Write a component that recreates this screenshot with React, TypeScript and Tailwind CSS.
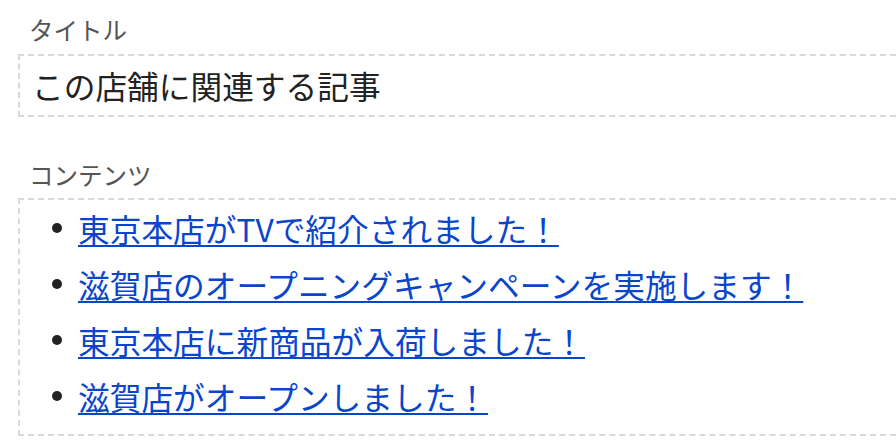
import React from "react";

const items = [
  "東京本店がTVで紹介されました！",
  "滋賀店のオープニングキャンペーンを実施します！",
  "東京本店に新商品が入荷しました！",
  "滋賀店がオープンしました！",
];

export default function App() {
  return (
    <div
      className="w-[896px] h-[446px] overflow-hidden bg-white pl-[18px] pt-[12px]"
      style={{ fontFamily: '"Noto Sans CJK JP", "Noto Sans", sans-serif' }}
    >
      <div className="pl-[11px] text-[24.5px] leading-[36px] text-[#555555]">タイトル</div>
      <div className="mt-[6px] mr-[-40px] border-[2px] border-dashed border-[#d9d9d9] pl-[12px] py-[6px] text-[31.7px] leading-[47px] text-[#222222]">
        この店舗に関連する記事
      </div>
      <div className="mt-[40px] pl-[11px] text-[24.5px] leading-[36px] text-[#555555]">コンテンツ</div>
      <div className="mt-[5px] mr-[-40px] border-[2px] border-dashed border-[#d9d9d9] pt-0 pb-[10px]">
        <ul className="pl-[32px]">
          {items.map((t) => (
            <li key={t} className="flex items-center h-[56px]">
              <span className="w-[10px] h-[10px] rounded-full bg-[#222222] shrink-0"></span>
              <a
                href="#"
                className="ml-[16px] text-[31.7px] leading-[56px] text-[#0a45cc] underline decoration-[2px] underline-offset-[3px]"
              >
                {t}
              </a>
            </li>
          ))}
        </ul>
      </div>
    </div>
  );
}
